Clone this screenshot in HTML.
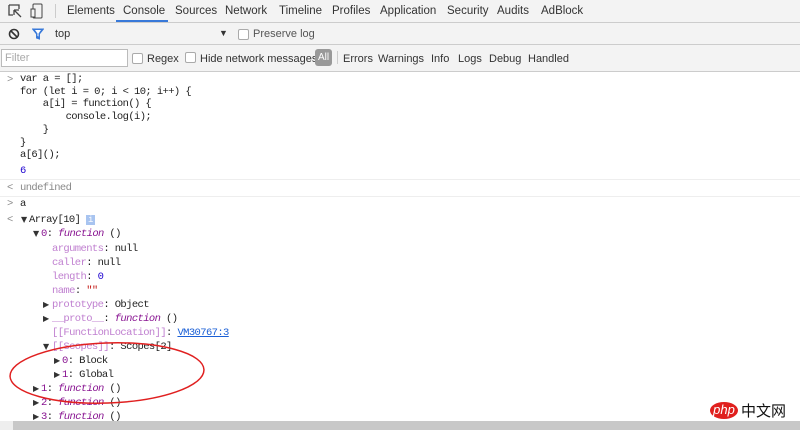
<html><head><style>
body{margin:0;width:800px;height:430px;overflow:hidden;background:#fff;font-family:"Liberation Sans",sans-serif;position:relative}
.bar{position:absolute;left:0;width:800px;background:#f3f3f3;border-bottom:1px solid #ccc;font-size:11px;color:#333}
.t{position:absolute;top:5px}
.m{font-family:"Liberation Mono",monospace;font-size:10.5px;letter-spacing:-0.6px;position:absolute;white-space:pre;color:#222;line-height:14px}
.p{color:#881391}.i{font-style:italic;color:#881391}.pl{color:#c080d0}.g{color:#888}.n{color:#1c00cf}
.cb{position:absolute;width:9px;height:9px;border:1px solid #aaa;background:#fff;border-radius:2px}
.tr{position:absolute;font-size:8px;color:#333;line-height:14px;font-family:"DejaVu Sans",sans-serif}
</style></head><body>
<div class="bar" style="top:0;height:22px;font-size:11.5px">
<svg style="position:absolute;left:8px;top:4px" width="14" height="14"><path d="M1 1h10v4M1 1v10h4M6 6l7 7M6 6v5M6 6h5" stroke="#444" fill="none" stroke-width="1.3"/></svg>
<svg style="position:absolute;left:30px;top:3px" width="14" height="16"><rect x="3" y="1" width="9" height="14" rx="1" stroke="#444" fill="none"/><rect x="1" y="6" width="4" height="8" stroke="#444" fill="#f3f3f3"/></svg>
<div style="position:absolute;left:55px;top:4px;width:1px;height:14px;background:#ccc"></div>
<span class="t" style="left:67px">Elements</span><span class="t" style="left:123px">Console</span><span class="t" style="left:175px">Sources</span><span class="t" style="left:225px">Network</span><span class="t" style="left:279px">Timeline</span><span class="t" style="left:332px">Profiles</span><span class="t" style="left:380px">Application</span><span class="t" style="left:447px">Security</span><span class="t" style="left:497px">Audits</span><span class="t" style="left:541px">AdBlock</span>
<div style="position:absolute;left:116px;top:20px;width:52px;height:2px;background:#3879d9"></div>
</div>
<div class="bar" style="top:23px;height:21px">
<svg style="position:absolute;left:8px;top:5px" width="12" height="12"><circle cx="6" cy="6" r="4.5" stroke="#333" stroke-width="1.6" fill="none"/><path d="M3 3l6 6" stroke="#333" stroke-width="1.6"/></svg>
<svg style="position:absolute;left:32px;top:5px" width="12" height="12"><path d="M0.5 1h11l-4 5v5l-3-1v-4z" fill="#3879d9" stroke="#3879d9"/><path d="M3 2h6l-2.5 3.5v3l-1-.5v-2.5z" fill="#fff"/></svg>
<span class="t" style="left:55px;top:5px">top</span><span class="t" style="left:219px;top:5px;font-size:9px">▼</span>
<div class="cb" style="left:238px;top:6px"></div><span class="t" style="left:253px;top:5px;color:#555">Preserve log</span>
</div>
<div class="bar" style="top:45px;height:26px">
<div style="position:absolute;left:1px;top:4px;width:122px;height:16px;border:1px solid #bbb;background:#fff;color:#aaa;font-size:11px;line-height:16px;padding-left:3px">Filter</div>
<div class="cb" style="left:132px;top:8px"></div><span class="t" style="left:147px;top:8px">Regex</span>
<div class="cb" style="left:185px;top:7px"></div><span class="t" style="left:200px;top:8px">Hide network messages</span>
<div style="position:absolute;left:315px;top:4px;width:17px;height:17px;background:#999;border-radius:3px;color:#fff;font-size:10px;line-height:17px;text-align:center">All</div>
<div style="position:absolute;left:337px;top:6px;width:1px;height:13px;background:#ccc"></div>
<span class="t" style="left:343px;top:8px">Errors</span><span class="t" style="left:378px;top:8px">Warnings</span><span class="t" style="left:431px;top:8px">Info</span><span class="t" style="left:458px;top:8px">Logs</span><span class="t" style="left:489px;top:8px">Debug</span><span class="t" style="left:528px;top:8px">Handled</span>
</div>
<div class="m g" style="left:7px;top:73px">&gt;</div>
<div class="m" style="left:20px;top:73px;line-height:12.7px">var a = [];
for (let i = 0; i &lt; 10; i++) {
    a[i] = function() {
        console.log(i);
    }
}
a[6]();</div>
<div class="m n" style="left:20px;top:164px">6</div>
<div style="position:absolute;left:0;top:179px;width:800px;height:1px;background:#eee"></div>
<div class="m g" style="left:7px;top:181px">&lt;</div><div class="m g" style="left:20px;top:181px">undefined</div>
<div style="position:absolute;left:0;top:196px;width:800px;height:1px;background:#eee"></div>
<div class="m g" style="left:7px;top:197px">&gt;</div><div class="m" style="left:20px;top:197px">a</div>
<div class="m g" style="left:7px;top:213px">&lt;</div>
<div class="tr" style="left:21px;top:213px">▼</div><div class="m" style="left:29px;top:213px">Array[10] <span style="background:#a8c4f0;color:#fff;font-size:9px;padding:0 2px">i</span></div>
<div class="tr" style="left:33px;top:227px">▼</div><div class="m" style="left:41px;top:227px"><span class="p">0</span>: <span class="i">function</span> ()</div>
<div class="m" style="left:52px;top:242px"><span class="pl">arguments</span>: null</div>
<div class="m" style="left:52px;top:256px"><span class="pl">caller</span>: null</div>
<div class="m" style="left:52px;top:270px"><span class="pl">length</span>: <span class="n">0</span></div>
<div class="m" style="left:52px;top:284px"><span class="pl">name</span>: <span style="color:#c41a16">""</span></div>
<div class="tr" style="left:43px;top:298px">▶</div><div class="m" style="left:52px;top:298px"><span class="pl">prototype</span>: Object</div>
<div class="tr" style="left:43px;top:312px">▶</div><div class="m" style="left:52px;top:312px"><span class="pl">__proto__</span>: <span class="i">function</span> ()</div>
<div class="m" style="left:52px;top:326px"><span class="pl">[[FunctionLocation]]</span>: <span style="color:#1a5fd6;text-decoration:underline">VM30767:3</span></div>
<div class="tr" style="left:43px;top:340px">▼</div><div class="m" style="left:52px;top:340px"><span class="pl">[[Scopes]]</span>: Scopes[2]</div>
<div class="tr" style="left:54px;top:354px">▶</div><div class="m" style="left:62px;top:354px"><span class="p">0</span>: Block</div>
<div class="tr" style="left:54px;top:368px">▶</div><div class="m" style="left:62px;top:368px"><span class="p">1</span>: Global</div>
<div class="tr" style="left:33px;top:382px">▶</div><div class="m" style="left:41px;top:382px"><span class="p">1</span>: <span class="i">function</span> ()</div>
<div class="tr" style="left:33px;top:396px">▶</div><div class="m" style="left:41px;top:396px"><span class="p">2</span>: <span class="i">function</span> ()</div>
<div class="tr" style="left:33px;top:410px">▶</div><div class="m" style="left:41px;top:410px"><span class="p">3</span>: <span class="i">function</span> ()</div>
<svg style="position:absolute;left:0;top:0" width="800" height="430"><ellipse cx="107" cy="373" rx="97" ry="30" fill="none" stroke="#e02020" stroke-width="1.5" transform="rotate(-2 107 373)"/></svg>
<div style="position:absolute;left:710px;top:402px;width:28px;height:17px;border-radius:50%;background:#e0201e;color:#fff;font-style:italic;font-size:13px;line-height:16px;text-align:center">php</div>
<div style="position:absolute;left:741px;top:400px;font-family:'Noto Sans CJK SC',sans-serif;font-size:15px;color:#111">中文网</div>
<div style="position:absolute;left:0;top:421px;width:800px;height:9px;background:#c8c8c8"></div>
<div style="position:absolute;left:0;top:421px;width:13px;height:9px;background:#eee"></div>
</body></html>
